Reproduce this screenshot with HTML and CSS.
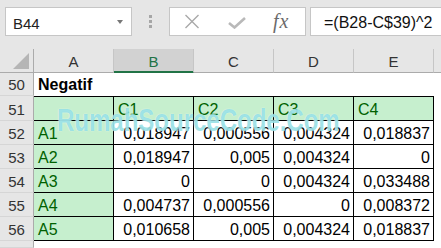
FILE: index.html
```html
<!DOCTYPE html>
<html lang="id">
<head>
    <meta charset="UTF-8">
    <meta name="viewport" content="width=device-width, initial-scale=1.0">
    <title>Negatif</title>
    <link rel="stylesheet" href="styles.css">
</head>
<body>

    <!-- Formula bar -->
    <div class="toolbar">
        <div class="name-box">
            <span>B44</span>
            <span class="caret"></span>
        </div>
        <div class="grip"><i></i><i></i><i></i></div>
        <div class="fx-box">
            <svg class="ico-x" width="16" height="15" viewBox="0 0 16 15">
                <path d="M1.5 1 L14.5 14 M14.5 1 L1.5 14" stroke="#a9a9a9" stroke-width="1.4" fill="none"/>
            </svg>
            <svg class="ico-ok" width="18" height="12" viewBox="0 0 18 12">
                <path d="M1 6 L6.5 10.5 L17 1" stroke="#b9b9b9" stroke-width="2.6" fill="none"/>
            </svg>
            <span class="fx">fx</span>
        </div>
        <div class="formula">=(B28-C$39)^2</div>
    </div>

    <!-- Lembar kerja -->
    <div class="sheet">
        <div class="corner">
            <svg width="16" height="16" viewBox="0 0 16 16"><path d="M16 0 L16 16 L0 16 Z" fill="#b5b5b5"/></svg>
        </div>
        <div class="col-head">A</div>
        <div class="col-head active">B</div>
        <div class="col-head">C</div>
        <div class="col-head">D</div>
        <div class="col-head">E</div>
        <div class="col-head last"></div>

        <div class="row-head">50</div>
        <div class="cell title">Negatif</div>
        <div class="cell"></div>
        <div class="cell"></div>
        <div class="cell"></div>
        <div class="cell"></div>
        <div class="cell"></div>

        <div class="row-head">51</div>
        <div class="cell good bd top"></div>
        <div class="cell good bd top">C1</div>
        <div class="cell good bd top">C2</div>
        <div class="cell good bd top">C3</div>
        <div class="cell good bd top">C4</div>
        <div class="cell"></div>

        <div class="row-head">52</div>
        <div class="cell good bd">A1</div>
        <div class="cell num bd">0,018947</div>
        <div class="cell num bd">0,000556</div>
        <div class="cell num bd">0,004324</div>
        <div class="cell num bd">0,018837</div>
        <div class="cell"></div>

        <div class="row-head">53</div>
        <div class="cell good bd">A2</div>
        <div class="cell num bd">0,018947</div>
        <div class="cell num bd">0,005</div>
        <div class="cell num bd">0,004324</div>
        <div class="cell num bd">0</div>
        <div class="cell"></div>

        <div class="row-head">54</div>
        <div class="cell good bd">A3</div>
        <div class="cell num bd">0</div>
        <div class="cell num bd">0</div>
        <div class="cell num bd">0,004324</div>
        <div class="cell num bd">0,033488</div>
        <div class="cell"></div>

        <div class="row-head">55</div>
        <div class="cell good bd">A4</div>
        <div class="cell num bd">0,004737</div>
        <div class="cell num bd">0,000556</div>
        <div class="cell num bd">0</div>
        <div class="cell num bd">0,008372</div>
        <div class="cell"></div>

        <div class="row-head">56</div>
        <div class="cell good bd">A5</div>
        <div class="cell num bd">0,010658</div>
        <div class="cell num bd">0,005</div>
        <div class="cell num bd">0,004324</div>
        <div class="cell num bd">0,018837</div>
        <div class="cell"></div>

        <div class="row-head"></div>
        <div class="cell"></div>
        <div class="cell"></div>
        <div class="cell"></div>
        <div class="cell"></div>
        <div class="cell"></div>
        <div class="cell"></div>

        <!-- Watermark di atas tabel -->
        <div class="watermark">RumahSourceCode.Com</div>
    </div>

</body>
</html>
```

FILE: styles.css
```css
body {
    margin: 0;
    background-color: #e6e6e6;
    font-family: "Liberation Sans", Arial, sans-serif;
    color: #000;
    overflow: hidden;
}

/* Formula bar */
.toolbar {
    display: flex;
    align-items: flex-start;
    height: 49px;
    padding: 7px 0 0 5px;
    box-sizing: border-box;
}

.name-box {
    display: flex;
    align-items: flex-start;
    width: 127px;
    height: 29px;
    box-sizing: border-box;
    padding: 4px 0 0 7px;
    border: 1px solid #c6c6c6;
    background-color: #fff;
    font-size: 15px;
    line-height: 23px;
    color: #222;
}

.caret {
    margin: 8px 8px 0 auto;
    border-top: 4px solid #777;
    border-left: 3px solid transparent;
    border-right: 3px solid transparent;
}

.grip {
    display: flex;
    flex-direction: column;
    align-items: center;
    gap: 2px;
    width: 37px;
    padding-top: 8px;
}

.grip i {
    width: 3px;
    height: 3px;
    background-color: #a6a6a6;
}

.fx-box {
    display: flex;
    align-items: center;
    width: 137px;
    height: 29px;
    box-sizing: border-box;
    padding-left: 14px;
    border: 1px solid #c6c6c6;
    background-color: #fff;
}

.ico-ok {
    margin-left: 28px;
    margin-top: 3px;
}

.fx {
    margin-left: 27px;
    font-family: "Liberation Serif", "Times New Roman", serif;
    font-style: italic;
    font-size: 20px;
    letter-spacing: 1px;
    color: #6b6b6b;
}

.formula {
    flex: 1;
    height: 29px;
    box-sizing: border-box;
    margin: 0 -2px 0 4px;
    padding: 4px 0 0 13px;
    border: 1px solid #c6c6c6;
    background-color: #fff;
    font-size: 16px;
    line-height: 22px;
    color: #111;
    white-space: nowrap;
}

/* Grid lembar kerja */
.sheet {
    position: relative;
    display: grid;
    grid-template-columns: 34px repeat(5, 80px) 1fr;
    grid-template-rows: 24px 23px 25px repeat(5, 24px) 1fr;
    height: 199px;
    background-color: #fff;
}

.corner,
.col-head,
.row-head {
    display: flex;
    box-sizing: border-box;
    background-color: #e6e6e6;
    font-size: 15px;
    line-height: 18px;
    color: #333;
}

.corner {
    align-items: flex-end;
    justify-content: flex-end;
    padding: 0 4px 3px 0;
    border-right: 1px solid #ababab;
    border-bottom: 1px solid #ababab;
}

.col-head {
    align-items: flex-end;
    justify-content: center;
    padding-bottom: 1px;
    border-right: 1px solid #c6c6c6;
    border-bottom: 1px solid #ababab;
}

.col-head.last {
    border-right: none;
}

/* Kolom terpilih */
.col-head.active {
    background-color: #d2d2d2;
    color: #217346;
    border-bottom-color: #217346;
    box-shadow: inset 0 -1px 0 #217346;
}

.row-head {
    align-items: flex-end;
    justify-content: center;
    padding-bottom: 1px;
    border-right: 1px solid #ababab;
    border-bottom: 1px solid #d6d6d6;
}

.cell {
    display: flex;
    align-items: flex-end;
    box-sizing: border-box;
    padding: 0 4px 1px 4px;
    background-color: #fff;
    font-size: 16px;
    line-height: 18px;
    white-space: nowrap;
}

.title {
    padding-bottom: 2px;
    font-weight: bold;
}

.num {
    justify-content: flex-end;
    padding-right: 3px;
}

.bd {
    border-right: 1px solid #000;
    border-bottom: 1px solid #000;
}

.top {
    border-top: 1px solid #000;
}

/* Gaya "Good" */
.good {
    background-color: #c6efce;
    color: #006100;
}

.watermark {
    position: absolute;
    top: 56px;
    left: 57px;
    font-size: 24px;
    line-height: 24px;
    font-weight: bold;
    white-space: nowrap;
    color: rgba(70, 200, 210, 0.5);
    text-shadow: 0 0 1px rgba(255, 255, 255, 0.9);
    transform: scaleY(1.3);
    transform-origin: top left;
    pointer-events: none;
}
```
